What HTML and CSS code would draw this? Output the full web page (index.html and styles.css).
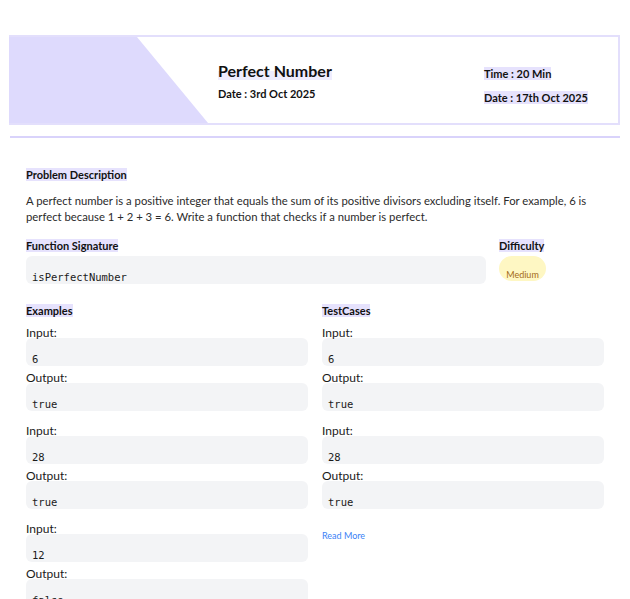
FILE: index.html
```html
<!DOCTYPE html>
<html lang="en">
<head>
<meta charset="utf-8">
<title>Perfect Number</title>
<link rel="stylesheet" href="styles.css">
</head>
<body>
<div class="page">
  <header class="header">
    <div class="slant"></div>
    <div class="title-block">
      <h1 class="title"><span class="hl-soft">Perfect Number</span></h1>
      <div class="meta">Date : 3rd Oct 2025</div>
    </div>
    <div class="side-block">
      <div class="meta"><span class="hl">Time : 20 Min</span></div>
      <div class="meta"><span class="hl">Date : 17th Oct 2025</span></div>
    </div>
  </header>
  <div class="rule"></div>

  <main class="content">
    <h2 class="heading"><span class="hl">Problem Description</span></h2>
    <p class="desc">A perfect number is a positive integer that equals the sum of its positive divisors excluding itself. For example, 6 is perfect because 1 + 2 + 3 = 6. Write a function that checks if a number is perfect.</p>

    <div class="sig-row">
      <div class="sig">
        <h2 class="heading"><span class="hl">Function Signature</span></h2>
        <div class="code">isPerfectNumber</div>
      </div>
      <div class="diff">
        <h2 class="heading"><span class="hl">Difficulty</span></h2>
        <div class="pill">Medium</div>
      </div>
    </div>

    <div class="cols">
      <section class="col">
        <h2 class="heading"><span class="hl">Examples</span></h2>
        <div class="case">
          <div class="label">Input:</div>
          <div class="code">6</div>
          <div class="label">Output:</div>
          <div class="code">true</div>
        </div>
        <div class="case">
          <div class="label">Input:</div>
          <div class="code">28</div>
          <div class="label">Output:</div>
          <div class="code">true</div>
        </div>
        <div class="case">
          <div class="label">Input:</div>
          <div class="code">12</div>
          <div class="label">Output:</div>
          <div class="code">false</div>
        </div>
      </section>
      <section class="col">
        <h2 class="heading"><span class="hl">TestCases</span></h2>
        <div class="case">
          <div class="label">Input:</div>
          <div class="code">6</div>
          <div class="label">Output:</div>
          <div class="code">true</div>
        </div>
        <div class="case">
          <div class="label">Input:</div>
          <div class="code">28</div>
          <div class="label">Output:</div>
          <div class="code">true</div>
        </div>
        <a class="more" href="#">Read More</a>
      </section>
    </div>
  </main>
</div>
</body>
</html>
```

FILE: styles.css
```css
* { box-sizing: border-box; }
html, body { margin: 0; padding: 0; background: #fff; }
body {
  font-family: "Lato", "Noto Sans", sans-serif;
  color: #1a1a1a;
  overflow: hidden;
}
.page {
  padding: 35px 10px 0 9px;
}
.header {
  display: flex;
  align-items: flex-start;
  height: 90px;
  border: 2px solid #e3dffc;
  border-left: none;
  background: #fff;
}
.slant {
  width: 199px;
  align-self: stretch;
  background: #dedafd;
  clip-path: polygon(0 0, 128px 0, 100% 100%, 0 100%);
}
.title-block {
  flex: 1;
  padding-top: 24px;
  padding-left: 10px;
}
.title {
  margin: 0;
  font-size: 16px;
  line-height: 20px;
  font-weight: 700;
  color: #111;
}
.title-block .meta { margin-top: 6px; }
.meta {
  font-size: 11px;
  line-height: 14px;
  font-weight: 700;
  color: #111;
}
.side-block {
  width: 134px;
  padding-top: 30px;
  display: flex;
  flex-direction: column;
  gap: 10px;
}
.hl { background: #e6e2fd; }
.hl-soft { background: linear-gradient(to bottom, transparent 55%, #efedfe 55%); }
.rule {
  height: 2px;
  margin-top: 11px;
  margin-left: 1px;
  background: #d9d3fb;
}
.content {
  padding: 30px 16px 0 17px;
}
.heading {
  margin: 0;
  font-size: 11px;
  line-height: 14px;
  font-weight: 700;
  color: #111;
}
.desc {
  margin: 11px 0 0;
  font-size: 11.3px;
  line-height: 15.5px;
  color: #2b2b2b;
}
.sig-row {
  display: flex;
  gap: 13px;
  margin-top: 15px;
}
.sig { flex: 1; }
.diff { width: 105px; }
.sig .heading, .diff .heading { margin-bottom: 3px; }
.code {
  background: #f3f4f6;
  border-radius: 6px;
  height: 28px;
  padding: 15px 6px 0;
  font-family: "DejaVu Sans Mono", monospace;
  font-size: 10.5px;
  line-height: 13px;
  color: #1a1a1a;
}
.pill {
  display: inline-block;
  width: 47px;
  height: 25px;
  border-radius: 13px;
  background: #fef7c3;
  color: #a36a16;
  font-size: 9px;
  line-height: 11px;
  padding-top: 13px;
  text-align: center;
}
.cols {
  display: grid;
  grid-template-columns: 1fr 1fr;
  gap: 14px;
  margin-top: 20px;
}
.col .heading { margin-bottom: 9px; }
.case { margin-bottom: 14px; }
.label {
  font-size: 12px;
  line-height: 11px;
  color: #1a1a1a;
}
.code + .label { margin-top: 6px; }
.more {
  display: inline-block;
  margin-top: -1px;
  font-size: 9px;
  color: #3b82f6;
  text-decoration: none;
}
```
